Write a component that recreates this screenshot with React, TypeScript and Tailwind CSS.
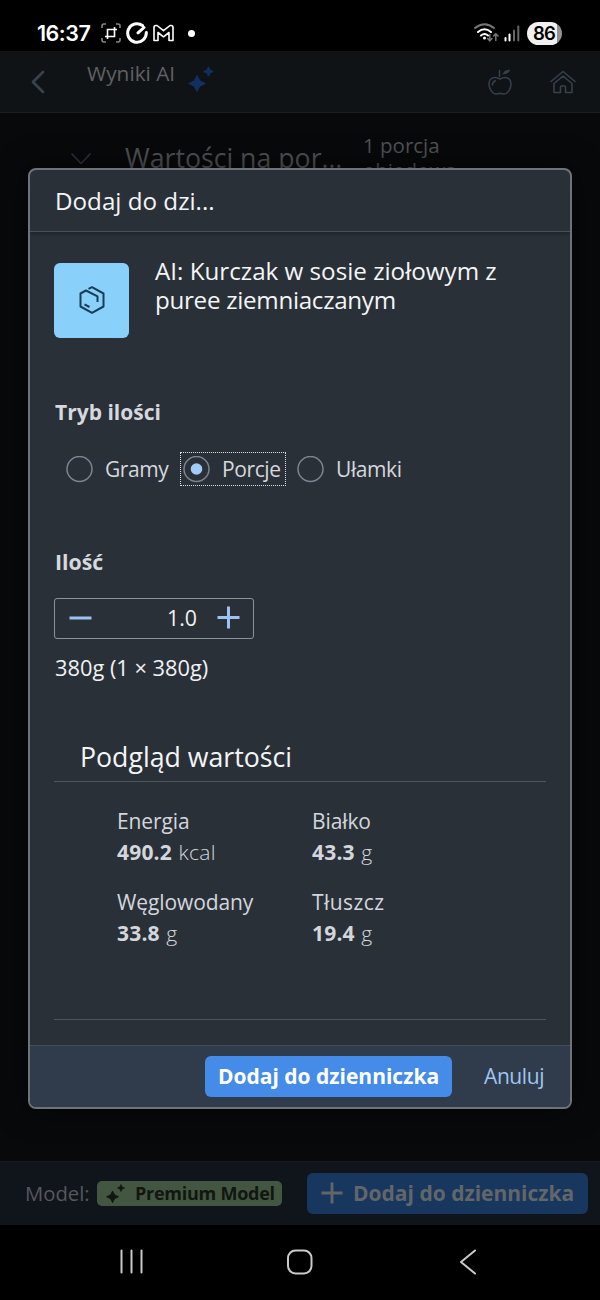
import React from "react";

function Sparkles({ className }: { className: string }) {
  return (
    <svg viewBox="0 0 26 26" className={className} fill="currentColor" stroke="currentColor" strokeWidth="1" strokeLinejoin="round">
      <path d="M9 9.500 L11.800 14.800 L17.300 17.500 L11.800 20.200 L9 25.500 L6.200 20.200 L0.700 17.500 L6.200 14.800Z" />
      <path d="M20.500 0.800 L22 4 L25.300 5.500 L22 7 L20.500 10.200 L19 7 L15.700 5.500 L19 4Z" />
    </svg>
  );
}

function StatusBar() {
  return (
    <div className="flex h-[51px] shrink-0 items-center bg-black pt-[15px] pr-[38px] pl-[37px] text-white">
      <span className="w-[64px] font-['Inter'] text-[21.5px] leading-[36px] font-semibold tracking-[-0.5px]">16:37</span>
      <svg className="h-5 w-[20px]" viewBox="0 0 20 20" fill="none" stroke="currentColor">
        <g stroke="#858585" strokeWidth="1.600">
          <path d="M1 5V3Q1 1 3 1H5M15 1H17Q19 1 19 3V5M19 15V17Q19 19 17 19H15M5 19H3Q1 19 1 17V15" />
        </g>
        <path d="M4 13.500H13.500V4M6.500 16V6.500H16" strokeWidth="1.600" />
      </svg>
      <svg className="ml-[5px] h-[22px] w-[22px]" viewBox="0 0 22 22" fill="none" stroke="currentColor" strokeWidth="3" strokeLinecap="round" strokeLinejoin="round">
        <path d="M20.300 10.500A9.300 9.300 0 1 1 16.500 3.500M18 5.500L12 10.800" />
      </svg>
      <svg className="ml-[5px] h-[18px] w-[21px]" viewBox="0 0 21 18" fill="none" stroke="currentColor" strokeWidth="1.600" strokeLinejoin="round">
        <path d="M1 3.500Q1 1.500 3 1.500H4L10.500 6.700L17 1.500H18Q20 1.500 20 3.500V16.500H16V8.500L10.500 12.800L5 8.500V16.500H1Z" />
      </svg>
      <span className="ml-[14px] h-[7px] w-[7px] rounded-full bg-white" />
      <svg className="ml-auto h-[20px] w-[26px]" viewBox="0 0 26 20" fill="none" strokeLinecap="round">
        <path d="M1 5Q10.500 -2.500 20 5" stroke="#777" strokeWidth="2" />
        <path d="M4 9Q10.500 3.500 17 9" stroke="#fff" strokeWidth="2" />
        <path d="M7 12.500Q10.500 9.500 14 12.500" stroke="#fff" strokeWidth="2" />
        <circle cx="10.500" cy="15" r="1.500" fill="#fff" />
        <path d="M15.800 11.500V17.500M13.600 15.500L15.800 17.800L18 15.500M21.800 17.500V11M19.600 13L21.800 10.800L24 13" stroke="#777" strokeWidth="1.500" />
      </svg>
      <svg className="ml-[4px] h-[17px] w-[16px]" viewBox="0 0 16 17">
        <rect x="0.500" y="12" width="2" height="4.500" rx="1" fill="#fff" />
        <rect x="4.500" y="8.500" width="2" height="8" rx="1" fill="#fff" />
        <rect x="9" y="4.500" width="2" height="12" rx="1" fill="#666" />
        <rect x="13.300" y="0.500" width="2" height="16" rx="1" fill="#666" />
      </svg>
      <span className="ml-[7px] flex h-[23px] w-[35px] items-center justify-center rounded-full bg-[linear-gradient(to_right,#f1f1f1_86%,#929292_86%)] pr-[1px] font-['Inter'] text-[18.500px] leading-[23px] font-semibold tracking-[-0.8px] text-black">
        86
      </span>
    </div>
  );
}

function AppHeader() {
  return (
    <header className="flex h-[62px] shrink-0 items-center border-b border-[#1b1d20] bg-[#101316] pr-[24px] pl-[31px]">
      <svg className="h-[24px] w-[14px] text-[#37424e]" viewBox="0 0 14 24" fill="none" stroke="currentColor" strokeWidth="2.800" strokeLinecap="round" strokeLinejoin="round">
        <path d="M12 2L2 12L12 22" />
      </svg>
      <span className="mb-[17px] ml-[42px] w-[101px] text-[20.8px] leading-[30px] whitespace-nowrap text-[#5f6163]">Wyniki AI</span>
      <Sparkles className="mt-[-6px] h-[26px] w-[26px] text-[#12305f]" />
      <svg className="ml-auto h-[26px] w-[24px] text-[#36414d]" viewBox="0 0 24 26" fill="none" stroke="currentColor" strokeWidth="1.500" strokeLinecap="round" strokeLinejoin="round">
        <path d="M12 10Q9 8.500 7 8.500C3 8.500 1 11.500 1 15C1 20 4.500 25 8 25Q10 25 12 24.300Q14 25 16 25C19.500 25 23 20 23 15C23 11.500 21 8.500 17 8.500Q15 8.500 12 10Z" />
        <path d="M11.500 7.500V1.500M4.500 16Q4.500 12.500 7.500 11.800" />
        <path d="M15 5Q16 1 22 1Q20.500 5 15 5Z" fill="currentColor" strokeWidth="0.500" />
      </svg>
      <svg className="ml-[38px] h-[24px] w-[26px] text-[#36414d]" viewBox="0 0 26 24" fill="none" stroke="currentColor" strokeWidth="1.600" strokeLinecap="round" strokeLinejoin="round">
        <path d="M1 11.500L13 1.500L25 11.500" />
        <path d="M4 13.500V22.500H10.500V17Q10.500 16 11.500 16H14.500Q15.500 16 15.500 17V22.500H22V13.500L13 6.200Z" />
      </svg>
    </header>
  );
}

function BackgroundPanel() {
  return (
    <main className="flex flex-1 items-start bg-[#08090b] pt-[17px] pl-[71px] text-[#505255]">
      <svg className="mt-[23px] h-[12px] w-[20px] text-[#2b3642]" viewBox="0 0 20 12" fill="none" stroke="currentColor" strokeWidth="1.600" strokeLinecap="round" strokeLinejoin="round">
        <path d="M1 1L10 10.500L19 1" />
      </svg>
      <span className="mt-[10px] ml-[34px] w-[238px] text-[26.7px] leading-[36px] whitespace-nowrap">Wartości na por…</span>
      <span className="mt-[3px] w-[110px] text-[20.5px] leading-[25px]">1 porcja obiedowa</span>
    </main>
  );
}

function AppFooter() {
  return (
    <footer className="flex h-[64px] shrink-0 items-center border-t border-[#171b20] bg-[#10151b] pr-[12px] pl-[25px]">
      <span className="w-[72px] pb-px text-[20.3px] leading-[30px] text-[#55585c]">Model:</span>
      <span className="flex h-[25px] w-[185px] items-center rounded-[5px] bg-[#435641] pl-[9px] text-[#111611]">
        <Sparkles className="mr-[10px] h-[19px] w-[19px]" />
        <span className="text-[18px] leading-[25px] font-bold tracking-[-0.25px] whitespace-nowrap">Premium Model</span>
      </span>
      <button className="ml-auto flex h-[41px] w-[281px] items-center rounded-[6px] bg-[#18375f] pb-px pl-[14px] text-[#636669]">
        <svg className="mr-[10px] h-[22px] w-[22px]" viewBox="0 0 22 22" stroke="currentColor" strokeWidth="2.800">
          <path d="M11 0.500V21.500M0.500 11H21.500" />
        </svg>
        <span className="text-[21px] leading-[30px] font-bold whitespace-nowrap">Dodaj do dzienniczka</span>
      </button>
    </footer>
  );
}

function NavBar() {
  return (
    <nav className="flex h-[75px] shrink-0 items-start bg-black pt-[24px] pl-[119px]">
      <svg className="h-[25px] w-[25px]" viewBox="0 0 25 25" stroke="#cacaca" strokeWidth="2" strokeLinecap="round">
        <path d="M2.500 1.500V23.500M12.500 1.500V23.500M22.500 1.500V23.500" />
      </svg>
      <svg className="ml-[142px] h-[26px] w-[27px]" viewBox="0 0 27 26" fill="none" stroke="#cacaca" strokeWidth="2">
        <rect x="2" y="1.500" width="23.500" height="23" rx="7.500" />
      </svg>
      <svg className="ml-[146px] h-[26px] w-[18px]" viewBox="0 0 18 26" fill="none" stroke="#cacaca" strokeWidth="2" strokeLinecap="round" strokeLinejoin="round">
        <path d="M16 1.500L2 13L16 24.500" />
      </svg>
    </nav>
  );
}

function Radio({ label, checked = false, className }: { label: string; checked?: boolean; className: string }) {
  return (
    <label className={`flex h-[34px] items-center ${className}`}>
      <svg className="mr-[12px] h-[27px] w-[27px] shrink-0" viewBox="0 0 27 27" fill="none">
        <circle cx="13.500" cy="13" r="12.500" stroke="#7d8591" strokeWidth="1.500" />
        {checked && <circle cx="13.500" cy="13" r="5.800" fill="#a1cbf8" />}
      </svg>
      <span className="text-[21px] leading-[30px] tracking-[-0.4px] whitespace-nowrap">{label}</span>
    </label>
  );
}

function Nutrient({ name, value, unit, nameClass = "tracking-[-0.1px]" }: { name: string; value: string; unit: string; nameClass?: string }) {
  return (
    <div className="text-[21px] leading-[31px] text-[#d3d6dc]">
      <div className={nameClass}>{name}</div>
      <div>
        <span className="font-bold tracking-[0.2px]">{value}</span>
        <span className="ml-[6.500px] font-light tracking-[0.3px]">{unit}</span>
      </div>
    </div>
  );
}

function Dialog() {
  return (
    <section className="absolute top-[168px] left-[28px] flex h-[941px] w-[544px] flex-col overflow-hidden rounded-[8px] border-2 border-[#6d7378] bg-[#2a3038] shadow-[0_0_30px_rgba(0,0,0,0.6)]">
      <header className="z-10 flex h-[62px] shrink-0 items-center border-b border-[#48505a] pl-[25px] shadow-[0_2px_3px_rgba(0,0,0,0.25)]">
        <h1 className="text-[24.200px] leading-[34px] text-[#f4f5f6]">Dodaj do dzi...</h1>
      </header>
      <div className="flex flex-1 flex-col items-start pt-[25px] pl-[24px] text-[#d5d8dd]">
        <div className="flex h-[81px]">
          <div className="mt-[6px] flex h-[75px] w-[75px] items-center justify-center rounded-[6px] bg-[#89d1fb] pb-[2px]">
            <svg className="h-[28px] w-[26px] text-[#193e58]" viewBox="0 0 26 28" fill="none" stroke="currentColor" strokeWidth="2" strokeLinejoin="round">
              <path d="M9.500 2.800L13 1.200L24.500 7.500V20.500L13 26.800L1.500 20.500V7.500L7 4.500L18.500 10.300V16M5.500 18.300L10.500 21" />
            </svg>
          </div>
          <h2 className="mt-[-1px] ml-[26px] w-[370px] text-[24.200px] leading-[29px] text-[#f4f5f6]">
            <span className="block">AI: Kurczak w sosie ziołowym z</span>
            <span className="block tracking-[-0.3px]">puree ziemniaczanym</span>
          </h2>
        </div>
        <div className="mt-[59px] pl-px text-[21px] leading-[30px] font-bold">Tryb ilości</div>
        <div className="mt-[25px] ml-[12px] flex">
          <Radio label="Gramy" className="w-[114px]" />
          <Radio label="Porcje" checked className="w-[106px] border border-dotted border-[#dcdfe3] pl-[2px]" />
          <Radio label="Ułamki" className="ml-[11px] w-[110px]" />
        </div>
        <div className="mt-[61px] pl-px text-[21.300px] leading-[30px] font-bold">Ilość</div>
        <div className="mt-[21px] flex h-[41px] w-[200px] items-center rounded-[3px] border border-[#8b939d] pl-[14px]">
          <svg className="h-[22px] w-[23px]" viewBox="0 0 23 22" stroke="#9bc2f0" strokeWidth="3">
            <path d="M0.500 10H22.500" />
          </svg>
          <span className="ml-auto pr-px pb-px text-[21.300px] leading-[30px] text-[#f1f2f4]">1.0</span>
          <svg className="mr-[13px] mb-[2px] ml-[19px] h-[23px] w-[23px]" viewBox="0 0 23 23" stroke="#9bc2f0" strokeWidth="3">
            <path d="M11.500 0.500V22.500M0.500 11.500H22.500" />
          </svg>
        </div>
        <div className="mt-[14px] pl-px text-[21.800px] leading-[30px] text-[#f1f2f4]">380g (1 × 380g)</div>
        <h3 className="mt-[56px] h-[43px] w-[492px] border-b border-[#4d555f] pl-[26px] text-[26.700px] leading-[36px] text-[#f4f5f6]">Podgląd wartości</h3>
        <div className="mt-[24px] ml-[63px] grid grid-cols-[195px_195px] gap-y-[19px]">
          <Nutrient name="Energia" value="490.2" unit="kcal" />
          <Nutrient name="Białko" value="43.3" unit="g" />
          <Nutrient name="Węglowodany" value="33.8" unit="g" />
          <Nutrient name="Tłuszcz" value="19.4" unit="g" nameClass="tracking-[0.45px]" />
        </div>
        <div className="mt-[70px] h-px w-[492px] bg-[#4a525b]" />
      </div>
      <footer className="flex h-[62px] shrink-0 items-center border-t border-[#43505e] bg-[#303c4b] pl-[175px]">
        <button className="h-[41px] w-[247px] rounded-[6px] bg-[#458ce8] pb-px text-[21px] leading-[37px] font-bold whitespace-nowrap text-white">Dodaj do dzienniczka</button>
        <button className="ml-[32px] pb-px text-[21px] leading-[37px] tracking-[-0.4px] text-[#9fc5f3]">Anuluj</button>
      </footer>
    </section>
  );
}

export default function App() {
  return (
    <div className="relative flex h-[1300px] w-[600px] flex-col overflow-hidden bg-black font-['Open_Sans','Noto_Sans',sans-serif]">
      <StatusBar />
      <AppHeader />
      <BackgroundPanel />
      <AppFooter />
      <NavBar />
      <Dialog />
    </div>
  );
}
